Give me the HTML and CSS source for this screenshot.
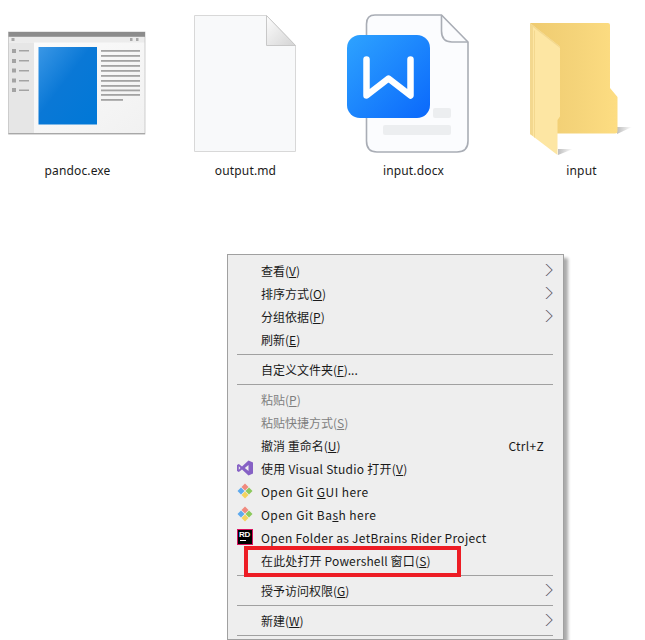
FILE: index.html
```html
<!DOCTYPE html>
<html lang="zh">
<head>
<meta charset="utf-8">
<title>Explorer</title>
<link rel="stylesheet" href="styles.css">
</head>
<body>
<section class="files">
  <figure class="file">
    <svg class="file-icon" viewBox="0 0 140 160" width="140" height="160">
      <defs>
        <linearGradient id="blue" x1="0" y1="0" x2="1" y2="1"><stop offset="0" stop-color="#3a97e6"/><stop offset=".45" stop-color="#0a78d6"/><stop offset="1" stop-color="#0078d7"/></linearGradient>
        <linearGradient id="pane" x1="0" y1="0" x2="1" y2="1"><stop offset="0" stop-color="#fdfdfd"/><stop offset="1" stop-color="#f1f1f1"/></linearGradient>
      </defs>
      <rect x="1.500" y="32" width="136.500" height="102" fill="url(#pane)"/>
      <rect x="1.500" y="36.500" width="136.500" height="6" fill="#ececec"/>
      <rect x="1.500" y="42.500" width="25.500" height="91" fill="#e6e6e6"/>
      <rect x="1.500" y="32" width="136.500" height="102" fill="none" stroke="#c4c4c4" stroke-width=".8"/>
      <rect x="1.500" y="32" width="136.500" height="4.800" fill="#8c8c8c"/>
      <rect x="1.500" y="133" width="136.500" height="1.200" fill="#a8a8a8"/>
      <rect x="31.500" y="47" width="58.500" height="77.500" fill="url(#blue)"/>
      <g fill="#a3a3a3">
        <rect x="5" y="49" width="4" height="4"/><rect x="5" y="59" width="4" height="4"/><rect x="5" y="68.500" width="4" height="4"/><rect x="5" y="78.500" width="4" height="4"/><rect x="5" y="88" width="4" height="4"/>
        <rect x="12" y="50" width="10" height="1.500"/><rect x="12" y="60" width="10" height="1.500"/><rect x="12" y="70" width="10" height="1.500"/><rect x="12" y="80" width="10" height="1.500"/><rect x="12" y="89.500" width="10" height="1.500"/>
        <rect x="94" y="50" width="39" height="1.800"/><rect x="94" y="55" width="39" height="1.800"/><rect x="94" y="60" width="39" height="1.800"/><rect x="94" y="65" width="39" height="1.800"/><rect x="94" y="70" width="39" height="1.800"/><rect x="94" y="75" width="39" height="1.800"/><rect x="94" y="80" width="39" height="1.800"/><rect x="94" y="85" width="39" height="1.800"/><rect x="94" y="89.500" width="39" height="1.800"/><rect x="94" y="94" width="39" height="1.800"/><rect x="94" y="99" width="22" height="1.800"/>
      </g>
      <rect x="123" y="38" width="2.500" height="3" fill="#a8a8a8"/><rect x="129" y="38" width="2.500" height="3" fill="#a8a8a8"/>
      <rect x="4.500" y="38" width="3" height="3" fill="#a8a8a8"/>
    </svg>
    <figcaption>pandoc.exe</figcaption>
  </figure>
  <figure class="file">
    <svg class="file-icon" viewBox="0 0 140 160" width="140" height="160">
      <defs>
        <linearGradient id="fold" x1="0" y1="0" x2="1" y2="1"><stop offset="0" stop-color="#fdfdfd"/><stop offset="1" stop-color="#d4d4d4"/></linearGradient>
      </defs>
      <path d="M19.500 15.500H91.500L120.500 45.500V151.500H19.500Z" fill="#f8f9fa" stroke="#d8d8d8"/>
      <path d="M91.500 15.500L120.500 45.500H91.500Z" fill="url(#fold)" stroke="#c8c8c8"/>
    </svg>
    <figcaption>output.md</figcaption>
  </figure>
  <figure class="file">
    <svg class="file-icon" viewBox="0 0 140 160" width="140" height="160">
      <defs>
        <linearGradient id="wps" x1="0" y1="0" x2="1" y2="1"><stop offset="0" stop-color="#2ea3ff"/><stop offset="1" stop-color="#0a68fb"/></linearGradient>
      </defs>
      <path d="M32 15H98.500L125 42V141Q125 152 114 152H34Q23.500 152 23.500 141V24Q23.500 15 32 15Z" fill="#fbfcfe" stroke="#a9adb5" stroke-width="1.600"/>
      <path d="M98.500 15V31Q98.500 42 109 42H125" fill="none" stroke="#a9adb5" stroke-width="1.600"/>
      <rect x="40" y="125" width="68" height="10" rx="2" fill="#eceef0"/>
      <rect x="90" y="108" width="18" height="10" rx="2" fill="#eceef0"/>
      <rect x="4" y="35" width="83" height="83" rx="13" fill="url(#wps)"/>
      <path d="M23.500 59.500V95.500L45.500 78.500L67.500 95.500V59.500" fill="none" stroke="#fff" stroke-width="6.500" stroke-linejoin="round" stroke-linecap="round"/>
    </svg>
    <figcaption>input.docx</figcaption>
  </figure>
  <figure class="file">
    <svg class="file-icon" viewBox="0 0 140 160" width="140" height="160">
      <defs>
        <linearGradient id="fback" x1="0" y1="0" x2="1" y2="0"><stop offset="0" stop-color="#efcb70"/><stop offset=".55" stop-color="#f5d47a"/><stop offset="1" stop-color="#fddd82"/></linearGradient>
        <linearGradient id="shade" x1="0" y1="0" x2="1" y2="0"><stop offset="0" stop-color="#bdbdbd"/><stop offset="1" stop-color="#ffffff"/></linearGradient>
      </defs>
      <path d="M106 134L121 127H106Z" fill="url(#shade)"/>
      <path d="M47 155L62 149H47Z" fill="url(#shade)"/>
      <path d="M19 23H97Q99 23 99 25V88L106.500 97V131Q106.500 133.500 104 133.500H46V48Z" fill="url(#fback)"/>
      <path d="M19 23L49 46.500V116.500L46.500 120V155L19 134Z" fill="#fde6a3"/>
      <path d="M19 23L49 46.500V48L22 27V136L19 134Z" fill="#f3d88f"/>
      <path d="M24 31V138L23 137V30Z" fill="#f3d88f"/>
    </svg>
    <figcaption>input</figcaption>
  </figure>
</section>

<nav class="menu">
  <div class="item"><span class="label">查看(<u>V</u>)</span><svg class="chev" viewBox="0 0 8 14"><path class="chev-hi" d="M1.500 1L7.500 7L1.500 13"/><path class="chev-lo" d="M.8 1L6.800 7L.8 13"/></svg></div>
  <div class="item"><span class="label">排序方式(<u>O</u>)</span><svg class="chev" viewBox="0 0 8 14"><path class="chev-hi" d="M1.500 1L7.500 7L1.500 13"/><path class="chev-lo" d="M.8 1L6.800 7L.8 13"/></svg></div>
  <div class="item"><span class="label">分组依据(<u>P</u>)</span><svg class="chev" viewBox="0 0 8 14"><path class="chev-hi" d="M1.500 1L7.500 7L1.500 13"/><path class="chev-lo" d="M.8 1L6.800 7L.8 13"/></svg></div>
  <div class="item"><span class="label">刷新(<u>E</u>)</span></div>
  <hr class="sep">
  <div class="item"><span class="label">自定义文件夹(<u>F</u>)...</span></div>
  <hr class="sep">
  <div class="item disabled"><span class="label">粘贴(<u>P</u>)</span></div>
  <div class="item disabled"><span class="label">粘贴快捷方式(<u>S</u>)</span></div>
  <div class="item"><span class="label">撤消 重命名(<u>U</u>)</span><span class="shortcut">Ctrl+Z</span></div>
  <div class="item">
    <svg class="item-icon" viewBox="0 0 16 16"><path d="M11.500 0.500L16 2.500V13.500L11.500 15.500L5 9.500L1.800 12L0 11V5L1.800 4L5 6.500ZM11.500 5L7.800 8L11.500 11ZM1.800 6.300V9.700L3.500 8Z" fill="#8661c5" fill-rule="evenodd"/></svg>
    <span class="label label-mixed">使用 Visual Studio 打开(<u>V</u>)</span>
  </div>
  <div class="item">
    <svg class="item-icon" viewBox="0 0 16 16"><path d="M8 0.500L11.500 4L8 7.500L4.500 4Z" fill="#f08a7e"/><path d="M4 4.500L7.500 8L4 11.500L0.500 8Z" fill="#5da9ee"/><path d="M12 4.500L15.500 8L12 11.500L8.500 8Z" fill="#8cc95c"/><path d="M8 8.500L11.500 12L8 15.500L4.500 12Z" fill="#f4d35e"/></svg>
    <span class="label label-git">Open Git <u>G</u>UI here</span>
  </div>
  <div class="item">
    <svg class="item-icon" viewBox="0 0 16 16"><path d="M8 0.500L11.500 4L8 7.500L4.500 4Z" fill="#f08a7e"/><path d="M4 4.500L7.500 8L4 11.500L0.500 8Z" fill="#5da9ee"/><path d="M12 4.500L15.500 8L12 11.500L8.500 8Z" fill="#8cc95c"/><path d="M8 8.500L11.500 12L8 15.500L4.500 12Z" fill="#f4d35e"/></svg>
    <span class="label label-git">Open Git Ba<u>s</u>h here</span>
  </div>
  <div class="item">
    <span class="rider"><span class="rider-text">RD</span><span class="rider-bar"></span></span>
    <span class="label label-latin">Open Folder as JetBrains Rider Project</span>
  </div>
  <div class="item"><span class="label label-ps">在此处打开 Powershell 窗口(<u>S</u>)</span><span class="highlight"></span></div>
  <hr class="sep">
  <div class="item"><span class="label">授予访问权限(<u>G</u>)</span><svg class="chev" viewBox="0 0 8 14"><path class="chev-hi" d="M1.500 1L7.500 7L1.500 13"/><path class="chev-lo" d="M.8 1L6.800 7L.8 13"/></svg></div>
  <hr class="sep">
  <div class="item"><span class="label">新建(<u>W</u>)</span><svg class="chev" viewBox="0 0 8 14"><path class="chev-hi" d="M1.500 1L7.500 7L1.500 13"/><path class="chev-lo" d="M.8 1L6.800 7L.8 13"/></svg></div>
  <hr class="sep">
</nav>
</body>
</html>
```

FILE: styles.css
```css
html, body {
  margin: 0;
  height: 640px;
  overflow: hidden;
  background: #fff;
}

body {
  font-family: "Noto Sans", "Noto Sans CJK SC", sans-serif;
  color: #1a1a1a;
}

.files {
  display: flex;
  gap: 28px;
  padding-left: 7px;
  height: 254px;
}

.file {
  flex: 0 0 140px;
  margin: 0;
  text-align: center;
}

.file-icon {
  display: block;
}

.file figcaption {
  padding-left: 1px;
  font-size: 12px;
  line-height: 22px;
  letter-spacing: .15px;
}

.menu {
  box-sizing: border-box;
  width: 337px;
  margin-left: 227px;
  padding: 4px 0 0;
  background: #eeeeee;
  border: 1px solid #a0a0a0;
  box-shadow: 4px 4px 3px rgba(0, 0, 0, .33);
  font-family: "Noto Sans CJK SC", "Noto Sans", sans-serif;
  font-size: 12px;
}

.item {
  position: relative;
  display: flex;
  align-items: center;
  height: 23px;
  padding: 0 10px 0 33px;
}

.label {
  flex: 1;
  white-space: nowrap;
}

.label-mixed {
  letter-spacing: .25px;
}

.label-git {
  letter-spacing: .45px;
}

.label-latin {
  letter-spacing: .3px;
}

.label-ps {
  letter-spacing: .15px;
}

.disabled {
  color: #7f7f7f;
}

.shortcut {
  margin-right: 9px;
  letter-spacing: .3px;
}

.chev {
  width: 8px;
  height: 14px;
  margin-top: -2px;
  fill: none;
  stroke-width: .8;
}

.chev-hi {
  stroke: #3f93e8;
}

.chev-lo {
  stroke: #8a4f35;
}

.item-icon {
  position: absolute;
  left: 9px;
  top: 3px;
  width: 16px;
  height: 16px;
}

.rider {
  position: absolute;
  left: 9px;
  top: 3px;
  box-sizing: border-box;
  width: 16px;
  height: 16px;
  padding: 1px 1px;
  background: #000;
  border: 1px solid #d8135f;
  color: #fff;
  font-family: "Liberation Sans", sans-serif;
  font-size: 8px;
  font-weight: 700;
  line-height: 8px;
}

.rider-text {
  display: block;
  letter-spacing: -.2px;
}

.rider-bar {
  display: block;
  width: 6px;
  height: 1px;
  margin-top: 1px;
  margin-left: 1px;
  background: #fff;
}

.highlight {
  position: absolute;
  left: 16px;
  top: -3px;
  width: 217px;
  height: 31px;
  box-sizing: border-box;
  border: 4px solid #ed1c24;
}

.sep {
  height: 1px;
  margin: 3px 10px 3px 9px;
  border: 0;
  background: #a0a0a0;
}
```
